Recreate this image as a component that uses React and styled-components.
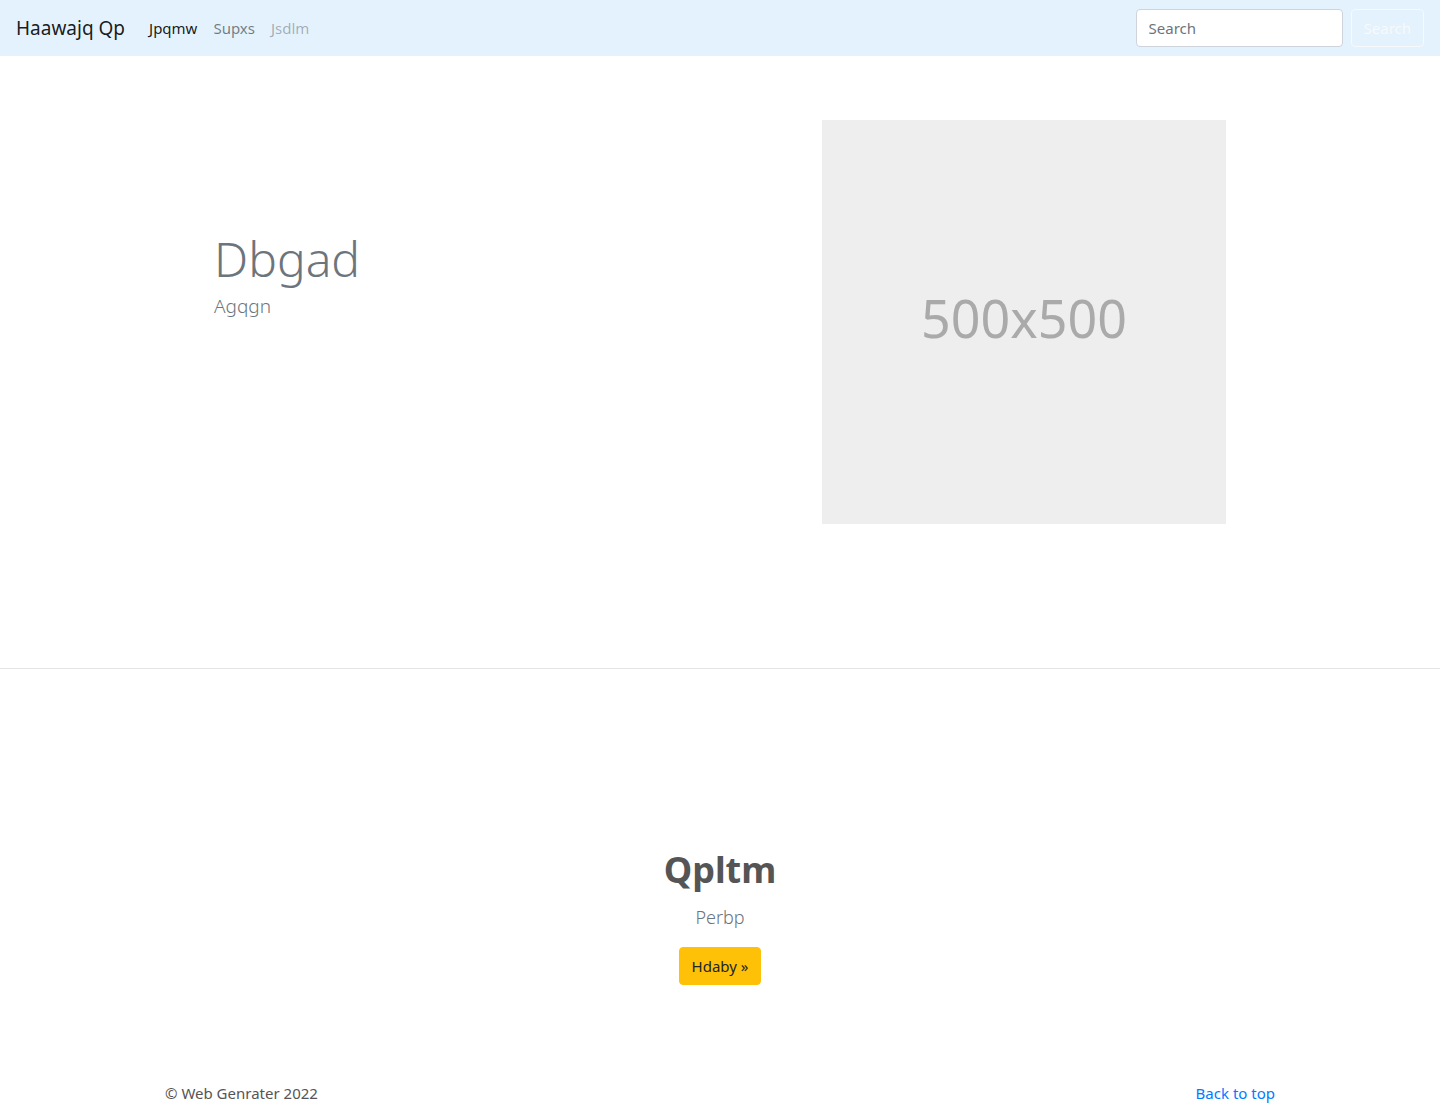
import React from "react";
import styled, { createGlobalStyle } from "styled-components";

const GlobalStyle = createGlobalStyle`
  body {
    margin: 0;
    font-family: "Noto Sans", "Open Sans", sans-serif;
    font-size: 15px;
    line-height: 1.5;
    color: #212529;
    background: #fff;
  }
  * { box-sizing: border-box; }
`;

export default function App() {
  return (
    <>
      <GlobalStyle />
      <Navbar>
        <Brand href="#">Haawajq Qp</Brand>
        <NavList>
          <NavLink href="#" $tone="active">Jpqmw</NavLink>
          <NavLink href="#">Supxs</NavLink>
          <NavLink href="#" $tone="disabled">Jsdlm</NavLink>
        </NavList>
        <SearchForm onSubmit={(e) => e.preventDefault()}>
          <SearchInput type="search" placeholder="Search" />
          <SearchButton type="submit">Search</SearchButton>
        </SearchForm>
      </Navbar>

      {/* hero */}
      <Container>
        <HeroRow>
          <HeroText>
            <Display>Dbgad</Display>
            <Lead>Agqgn</Lead>
          </HeroText>
          <HeroMedia>
            <Placeholder>500x500</Placeholder>
          </HeroMedia>
        </HeroRow>
      </Container>

      <Divider />

      {/* feature */}
      <Feature>
        <FeatureTitle>Qpltm</FeatureTitle>
        <Lead $center>Perbp</Lead>
        <YellowButton href="#">Hdaby &raquo;</YellowButton>
      </Feature>

      <Footer>
        <FooterText>&copy; Web Genrater 2022</FooterText>
        <TopLink href="#">Back to top</TopLink>
      </Footer>
    </>
  );
}

const Navbar = styled.nav`
  display: flex;
  align-items: center;
  height: 56px;
  padding: 0 16px;
  background: #e3f2fd;
`;

const Brand = styled.a`
  font-size: 19px;
  color: rgba(0, 0, 0, 0.9);
  text-decoration: none;
  margin-right: 16px;
  line-height: 30px;
`;

const NavList = styled.div`
  display: flex;
`;

const toneColor = {
  active: "rgba(0, 0, 0, 0.9)",
  disabled: "rgba(0, 0, 0, 0.3)",
};

const NavLink = styled.a`
  padding: 8px;
  color: ${(p) => toneColor[p.$tone] || "rgba(0, 0, 0, 0.5)"};
  text-decoration: none;
  font-size: 15px;
`;

const SearchForm = styled.form`
  display: flex;
  align-items: center;
  margin-left: auto;
`;

const SearchInput = styled.input`
  width: 207px;
  height: 38px;
  padding: 6px 12px;
  font-family: inherit;
  font-size: 15px;
  color: #495057;
  background: #fff;
  border: 1px solid #ced4da;
  border-radius: 4px;
  margin-right: 8px;
  outline: none;
  &::placeholder {
    color: #6c757d;
  }
`;

const SearchButton = styled.button`
  height: 38px;
  padding: 6px 12px;
  font-family: inherit;
  font-size: 15px;
  color: #f8f9fa;
  background: transparent;
  border: 1px solid #f8f9fa;
  border-radius: 4px;
`;

const Container = styled.div`
  width: 1140px;
  margin: 0 auto;
`;

const HeroRow = styled.div`
  display: grid;
  grid-template-columns: 1fr 1fr;
  padding: 64px 0 144px;
`;

const HeroText = styled.div`
  padding: 110px 0 0 64px;
`;

const Display = styled.h1`
  margin: 0;
  font-size: 48px;
  font-weight: 300;
  line-height: 1.2;
  color: #6c757d;
`;

const Lead = styled.p`
  margin: ${(p) => (p.$center ? "9px 0 16px" : "4px 0 0")};
  font-size: ${(p) => (p.$center ? "18px" : "19px")};
  font-weight: 300;
  color: #6c757d;
  text-align: ${(p) => (p.$center ? "center" : "left")};
`;

const HeroMedia = styled.div`
  padding-left: 102px;
`;

const Placeholder = styled.div`
  width: 404px;
  height: 404px;
  display: flex;
  align-items: center;
  justify-content: center;
  padding-bottom: 8px;
  background: #eee;
  color: #aaa;
  font-size: 52px;
`;

const Divider = styled.hr`
  margin: 0;
  border: 0;
  border-top: 1px solid rgba(0, 0, 0, 0.1);
`;

const Feature = styled.section`
  display: flex;
  flex-direction: column;
  align-items: center;
  padding: 179px 0 97px;
`;

const FeatureTitle = styled.h2`
  margin: 0 0 4px;
  font-size: 36px;
  font-weight: 700;
  line-height: 1.2;
  color: #555;
`;

const YellowButton = styled.a`
  display: inline-block;
  padding: 6px 12px;
  font-size: 15px;
  line-height: 24px;
  color: #212529;
  background: #ffc107;
  border: 1px solid #ffc107;
  border-radius: 4px;
  text-decoration: none;
`;

const Footer = styled.footer`
  width: 1140px;
  margin: 0 auto;
  padding: 0 15px;
  display: flex;
  justify-content: space-between;
`;

const FooterText = styled.p`
  margin: 0;
  color: #555;
`;

const TopLink = styled.a`
  color: #007bff;
  text-decoration: none;
`;
